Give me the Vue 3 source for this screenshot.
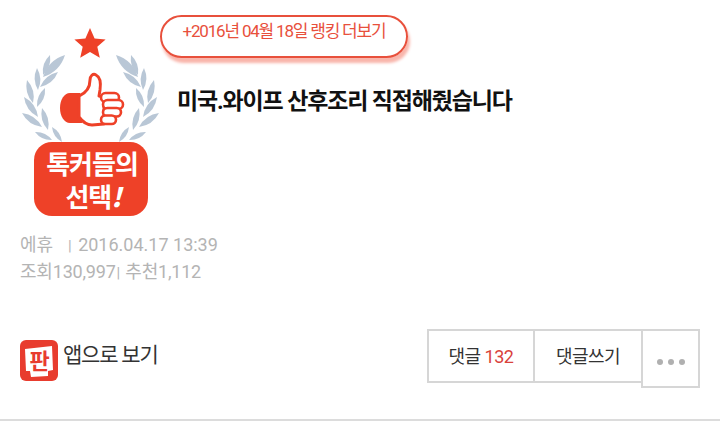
<script setup>
const leaves = [
  [43, 77, 65, 55], [43, 75, 50, 55], [38, 90, 37, 68], [40, 87, 58, 72],
  [33, 103, 27, 80], [37, 107, 45, 88], [38, 117, 24, 97], [48, 130, 42, 108],
  [42, 127, 22, 113], [62, 142, 52, 127], [52, 140, 35, 132],
];

// leaf shape between base and tip, bulging on both sides
const leafPath = ([x1, y1, x2, y2]) => {
  const mx = (x1 + x2) / 2;
  const my = (y1 + y2) / 2;
  const nx = -(y2 - y1) * 0.26;
  const ny = (x2 - x1) * 0.26;
  return `M${x1} ${y1}Q${mx + nx} ${my + ny} ${x2} ${y2}Q${mx - nx} ${my - ny} ${x1} ${y1}Z`;
};

const leafPaths = leaves.map(leafPath);
const fingers = [
  [101, 93, 18, 9],
  [103, 100, 20, 9],
  [103, 108, 18, 8.500],
  [101, 115.500, 15, 8.500],
];
</script>

<template>
  <div class="page">
    <div class="top">
      <svg class="badge" width="140" height="195" viewBox="20 25 140 195">
        <path fill="#ee4128" d="M90 28l4.600 10.400 11 1-8.300 7.300 2.500 11L90 52l-9.800 5.700 2.500-11-8.300-7.300 11-1z" />
        <g fill="#b9c7d6">
          <path v-for="(d, i) in leafPaths" :key="'l' + i" :d="d" />
          <path v-for="(d, i) in leafPaths" :key="'r' + i" :d="d" transform="matrix(-1 0 0 1 181 0)" />
        </g>
        <path fill="#ee4128" d="M80 93H70c-6 0-10 7-10 15s4 15 10 15h12z" />
        <path fill="#fff" stroke="#ee4128" stroke-width="3" stroke-linejoin="round" d="M79 96c7-3 11-9 11-16 0-4 3-7 6-5 4 2 5 8 4 15l-1 6 5 1v27l-12 1c-6 0-10-4-13-8z" />
        <rect v-for="(f, i) in fingers" :key="'f' + i" :x="f[0]" :y="f[1]" :width="f[2]" :height="f[3]" :rx="f[3] / 2" fill="#fff" stroke="#ee4128" stroke-width="2.600" />
        <rect x="34" y="142" width="114" height="74" rx="18" fill="#ee4128" />
        <text class="badge-text" x="92" y="174" text-anchor="middle">톡커들의</text>
        <text class="badge-text" x="93" y="207" text-anchor="middle">선택<tspan class="bang">!</tspan></text>
      </svg>
      <div class="head">
        <a class="rank-pill">+2016년 04월 18일 랭킹 더보기</a>
        <h1 class="title">미국.와이프 산후조리 직접해줬습니다</h1>
      </div>
    </div>

    <div class="meta">
      <div class="meta-row"><span class="writer">에휴</span><span class="bar">|</span> 2016.04.17 13:39</div>
      <div class="meta-row tight">조회130,997<span class="bar2">|</span> 추천1,112</div>
    </div>

    <div class="bottom">
      <div class="app-link">
        <svg class="app-icon" width="38" height="41" viewBox="0 0 38 41">
          <rect width="38" height="41" rx="6" fill="#e83c2e" />
          <path fill="#fff" d="M5 9l27-3 1 24-5 1 0 5-17 1-1-6-4 0z" />
          <text class="app-glyph" x="19" y="29" text-anchor="middle">판</text>
        </svg>
        <span class="app-label">앱으로 보기</span>
      </div>
      <div class="actions">
        <a class="act act-count">댓글 <em>132</em></a>
        <a class="act act-write">댓글쓰기</a>
        <a class="act act-more"><i></i><i></i><i></i></a>
      </div>
    </div>

    <div class="rule"></div>
  </div>
</template>

<style scoped>
.page {
  width: 720px;
  height: 429px;
  overflow: hidden;
  background: #fff;
  font-family: Roboto, "Noto Sans CJK KR", sans-serif;
}

.top {
  display: flex;
  height: 220px;
}

.badge {
  flex: none;
  margin: 25px 0 0 20px;
}

.badge-text {
  font-family: "Noto Sans CJK KR", sans-serif;
  font-size: 26px;
  font-weight: 700;
  fill: #fff;
  letter-spacing: -1px;
}

.bang {
  font-style: italic;
  font-weight: 900;
}

.head {
  display: flex;
  flex-direction: column;
  align-items: flex-start;
  padding-top: 15px;
}

.rank-pill {
  width: 248px;
  height: 43px;
  box-sizing: border-box;
  border: 2px solid #e8503c;
  border-radius: 22px;
  box-shadow: 2px 5px 3px #f9b5ab;
  color: #e8503c;
  font-size: 17px;
  line-height: 28px;
  letter-spacing: -1.200px;
  text-align: center;
  white-space: nowrap;
}

.title {
  margin: 28px 0 0 17px;
  color: #111;
  font-size: 23px;
  font-weight: 700;
  line-height: 32px;
  letter-spacing: -1.150px;
  white-space: nowrap;
}

.meta {
  margin: 12px 0 0 20px;
  color: #b4b4b4;
  font-size: 18px;
  line-height: 26px;
}

.meta-row {
  white-space: nowrap;
}

.tight {
  letter-spacing: -0.200px;
}

.writer {
  display: inline-block;
  width: 48px;
}

.bar {
  font-size: 15px;
  margin-right: 2px;
}

.bar2 {
  font-size: 15px;
  margin: 0 1px;
}

.bottom {
  display: flex;
  justify-content: space-between;
  align-items: flex-start;
  margin: 43px 20px 0;
}

.app-link {
  display: flex;
  align-items: flex-start;
  gap: 5px;
  margin-top: 11px;
  color: #333;
  font-size: 21px;
  line-height: 30px;
  letter-spacing: -1.200px;
}

.app-glyph {
  font-family: "Noto Sans CJK KR", sans-serif;
  font-size: 22px;
  font-weight: 700;
  fill: #e83c2e;
}

.actions {
  display: flex;
  align-items: flex-start;
}

.act {
  box-sizing: border-box;
  height: 54px;
  border: 2px solid #d6d6d6;
  color: #333;
  font-size: 18px;
  line-height: 51px;
  text-align: center;
  letter-spacing: -0.500px;
  white-space: nowrap;
}

.act em {
  font-style: normal;
  color: #d9423c;
}

.act-count {
  width: 108px;
}

.act-write {
  width: 108px;
  margin-left: -2px;
  border-right: 0;
}

.act-more {
  display: flex;
  justify-content: center;
  align-items: center;
  gap: 5px;
  width: 59px;
  height: 59px;
  padding-top: 6px;
}

.act-more i {
  width: 6px;
  height: 6px;
  border-radius: 50%;
  background: #b0b0b0;
}

.rule {
  height: 2px;
  margin-top: 31px;
  background: #dcdcdc;
}
</style>
